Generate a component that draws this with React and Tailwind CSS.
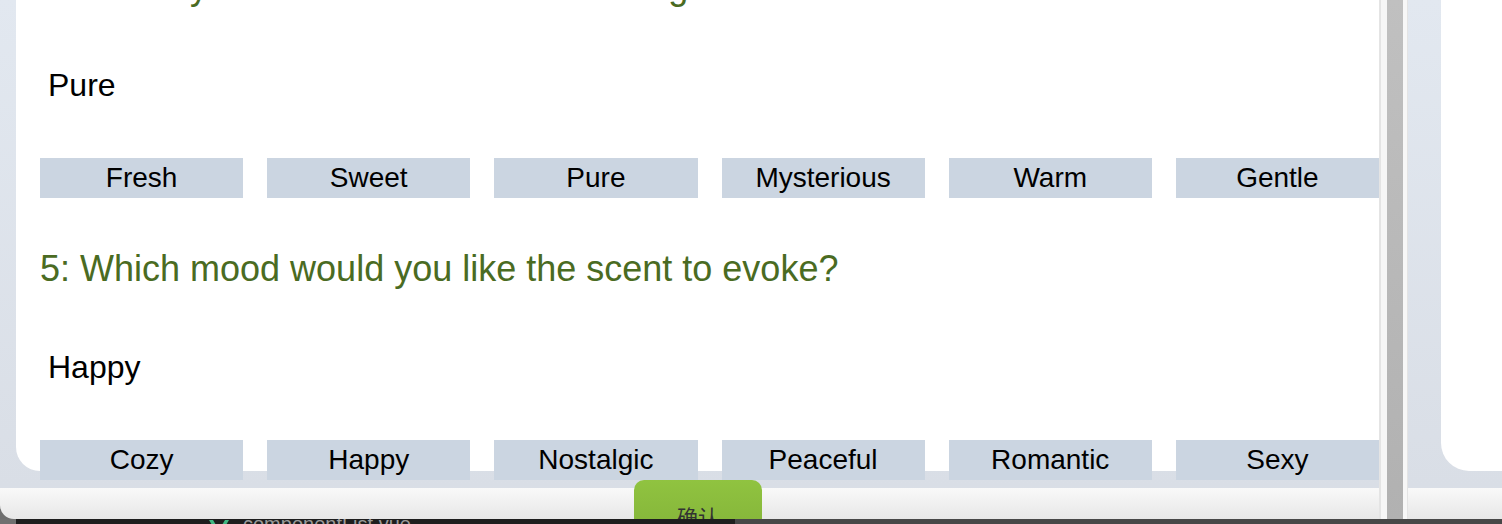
import React from "react";

const questions = [
  {
    title: "4: Select your most desired scent feeling",
    answer: "Pure",
    options: ["Fresh", "Sweet", "Pure", "Mysterious", "Warm", "Gentle"],
  },
  {
    title: "5: Which mood would you like the scent to evoke?",
    answer: "Happy",
    options: ["Cozy", "Happy", "Nostalgic", "Peaceful", "Romantic", "Sexy"],
  },
];

function Question({ q, first }) {
  return (
    <div className={first ? "" : "mt-[49px]"}>
      <div className="h-[44px] text-[36px] leading-[44px] text-[#4a6b22] whitespace-nowrap">
        {q.title}
      </div>
      <div className="mt-[56px] pl-[8px] h-[40px] text-[32px] leading-[40px] text-black">
        {q.answer}
      </div>
      <div className="mt-[53px] grid grid-cols-6 gap-[24px]">
        {q.options.map((o) => (
          <div
            key={o}
            className="h-[40px] bg-[#cbd5e1] text-center text-[28px] leading-[40px] text-black"
          >
            {o}
          </div>
        ))}
      </div>
    </div>
  );
}

export default function App() {
  return (
    <div className="relative w-[1502px] h-[524px] overflow-hidden flex flex-col font-['Liberation_Sans',Arial,sans-serif] bg-[#1e1e1e]">
      <div className="flex h-[519px]">
        {/* left pane */}
        <div className="w-[1379px] flex flex-col bg-[#6e6e6e]">
          <div className="h-[488px] flex flex-col bg-gradient-to-b from-[#e2e8f0] to-[#d9dee6] pl-[16px]">
            <div className="h-[471px] flex flex-col bg-white rounded-bl-[24px] pl-[24px]">
              <div className="-mt-[35px]">
                {questions.map((q, i) => (
                  <Question key={i} q={q} first={i === 0} />
                ))}
              </div>
            </div>
          </div>
          <div className="flex-1 rounded-bl-[14px] bg-gradient-to-b from-[#f9f9f9] to-[#e7e7e7]" />
        </div>

        {/* scrollbar */}
        <div className="w-[29px] flex border-l-2 border-[#e4e4e4]">
          <div className="w-[6px] bg-[#f6f6f6]" />
          <div className="w-[16px] bg-gradient-to-b from-[#c0c0c0] to-[#b1b1b1]" />
          <div className="w-[4px] bg-[#f7f7f7]" />
          <div className="w-[1px] bg-[#e4e4e4]" />
        </div>

        {/* right pane */}
        <div className="flex-1 flex flex-col">
          <div className="h-[488px] flex flex-col bg-gradient-to-b from-[#e2e8f0] to-[#d9dee6] pl-[33px]">
            <div className="h-[471px] bg-white rounded-bl-[28px]" />
          </div>
          <div className="flex-1 bg-gradient-to-b from-[#f9f9f9] to-[#e7e7e7]" />
        </div>
      </div>

      {/* bottom editor strip */}
      <div className="relative z-10 h-[5px] flex overflow-hidden">
        <div className="w-[16px] bg-[#707070]" />
        <div className="w-[719px] bg-[#1e1e1e] flex items-start">
          <svg className="ml-[193px] mt-[1px]" width="20" height="18" viewBox="0 0 20 18">
            <path d="M0 0 L10 17 L20 0 L16 0 L10 10 L4 0 Z" fill="#41b883" />
          </svg>
          <div className="ml-[14px] -mt-[5px] text-[20px] leading-[20px] text-[#9a9a9a] whitespace-nowrap">
            componentList.vue
          </div>
        </div>
        <div className="flex-1 bg-[#474747]" />
      </div>

      {/* confirm button */}
      <div className="absolute left-[634px] top-[480px] w-[128px] h-[39px] overflow-hidden rounded-t-[10px] bg-gradient-to-b from-[#90c340] to-[#87b83b] text-center pt-[25px] text-[21px] leading-[22px] text-[#333] font-['Noto_Sans_CJK_SC',sans-serif]">
        确认
      </div>
    </div>
  );
}
